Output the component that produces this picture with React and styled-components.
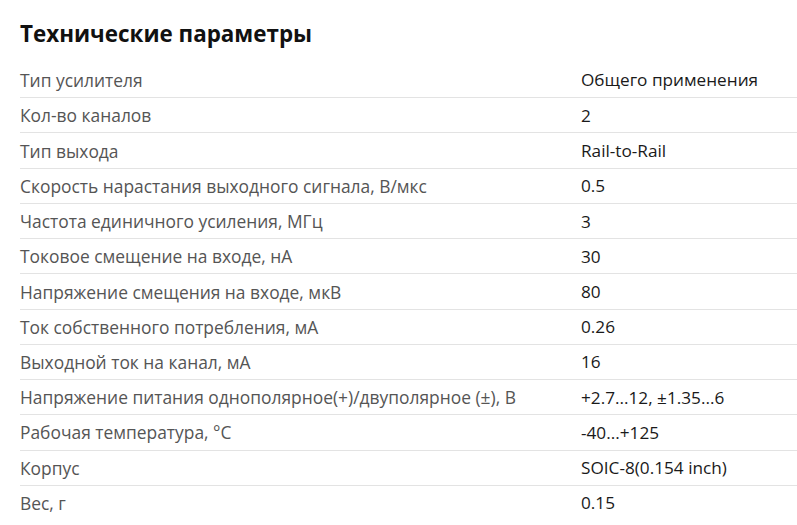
import React from "react";
import styled, { createGlobalStyle } from "styled-components";

const GlobalStyle = createGlobalStyle`
  body {
    margin: 0;
    background: #fff;
    font-family: "Open Sans", "Liberation Sans", sans-serif;
  }
`;

const Section = styled.section`
  padding: 19px 0 0 20px;
`;

const Title = styled.h2`
  margin: 0 0 13px;
  font-size: 22.4px;
  line-height: 30px;
  font-weight: 700;
  color: #111;
`;

const Table = styled.div`
  display: flex;
  flex-direction: column;
`;

const Row = styled.div`
  display: grid;
  grid-template-columns: 561px 1fr;
  height: 35.24px;
  align-items: center;
  box-sizing: border-box;
  border-top: ${(p) => (p.$first ? "none" : "1px solid #e3e3e3")};
`;

const Label = styled.div`
  font-size: 17.4px;
  color: #555;
`;

const Value = styled.div`
  font-size: 17.2px;
  color: #1a1a1a;
`;

const params = [
  ["Тип усилителя", "Общего применения"],
  ["Кол-во каналов", "2"],
  ["Тип выхода", "Rail-to-Rail"],
  ["Скорость нарастания выходного сигнала, В/мкс", "0.5"],
  ["Частота единичного усиления, МГц", "3"],
  ["Токовое смещение на входе, нА", "30"],
  ["Напряжение смещения на входе, мкВ", "80"],
  ["Ток собственного потребления, мА", "0.26"],
  ["Выходной ток на канал, мА", "16"],
  ["Напряжение питания однополярное(+)/двуполярное (±), В", "+2.7...12, ±1.35...6"],
  ["Рабочая температура, °C", "-40...+125"],
  ["Корпус", "SOIC-8(0.154 inch)"],
  ["Вес, г", "0.15"],
];

export default function App() {
  return (
    <>
      <GlobalStyle />
      <Section>
        <Title>Технические параметры</Title>
        <Table>
          {params.map(([label, value], i) => (
            <Row key={label} $first={i === 0}>
              <Label>{label}</Label>
              <Value>{value}</Value>
            </Row>
          ))}
        </Table>
      </Section>
    </>
  );
}
